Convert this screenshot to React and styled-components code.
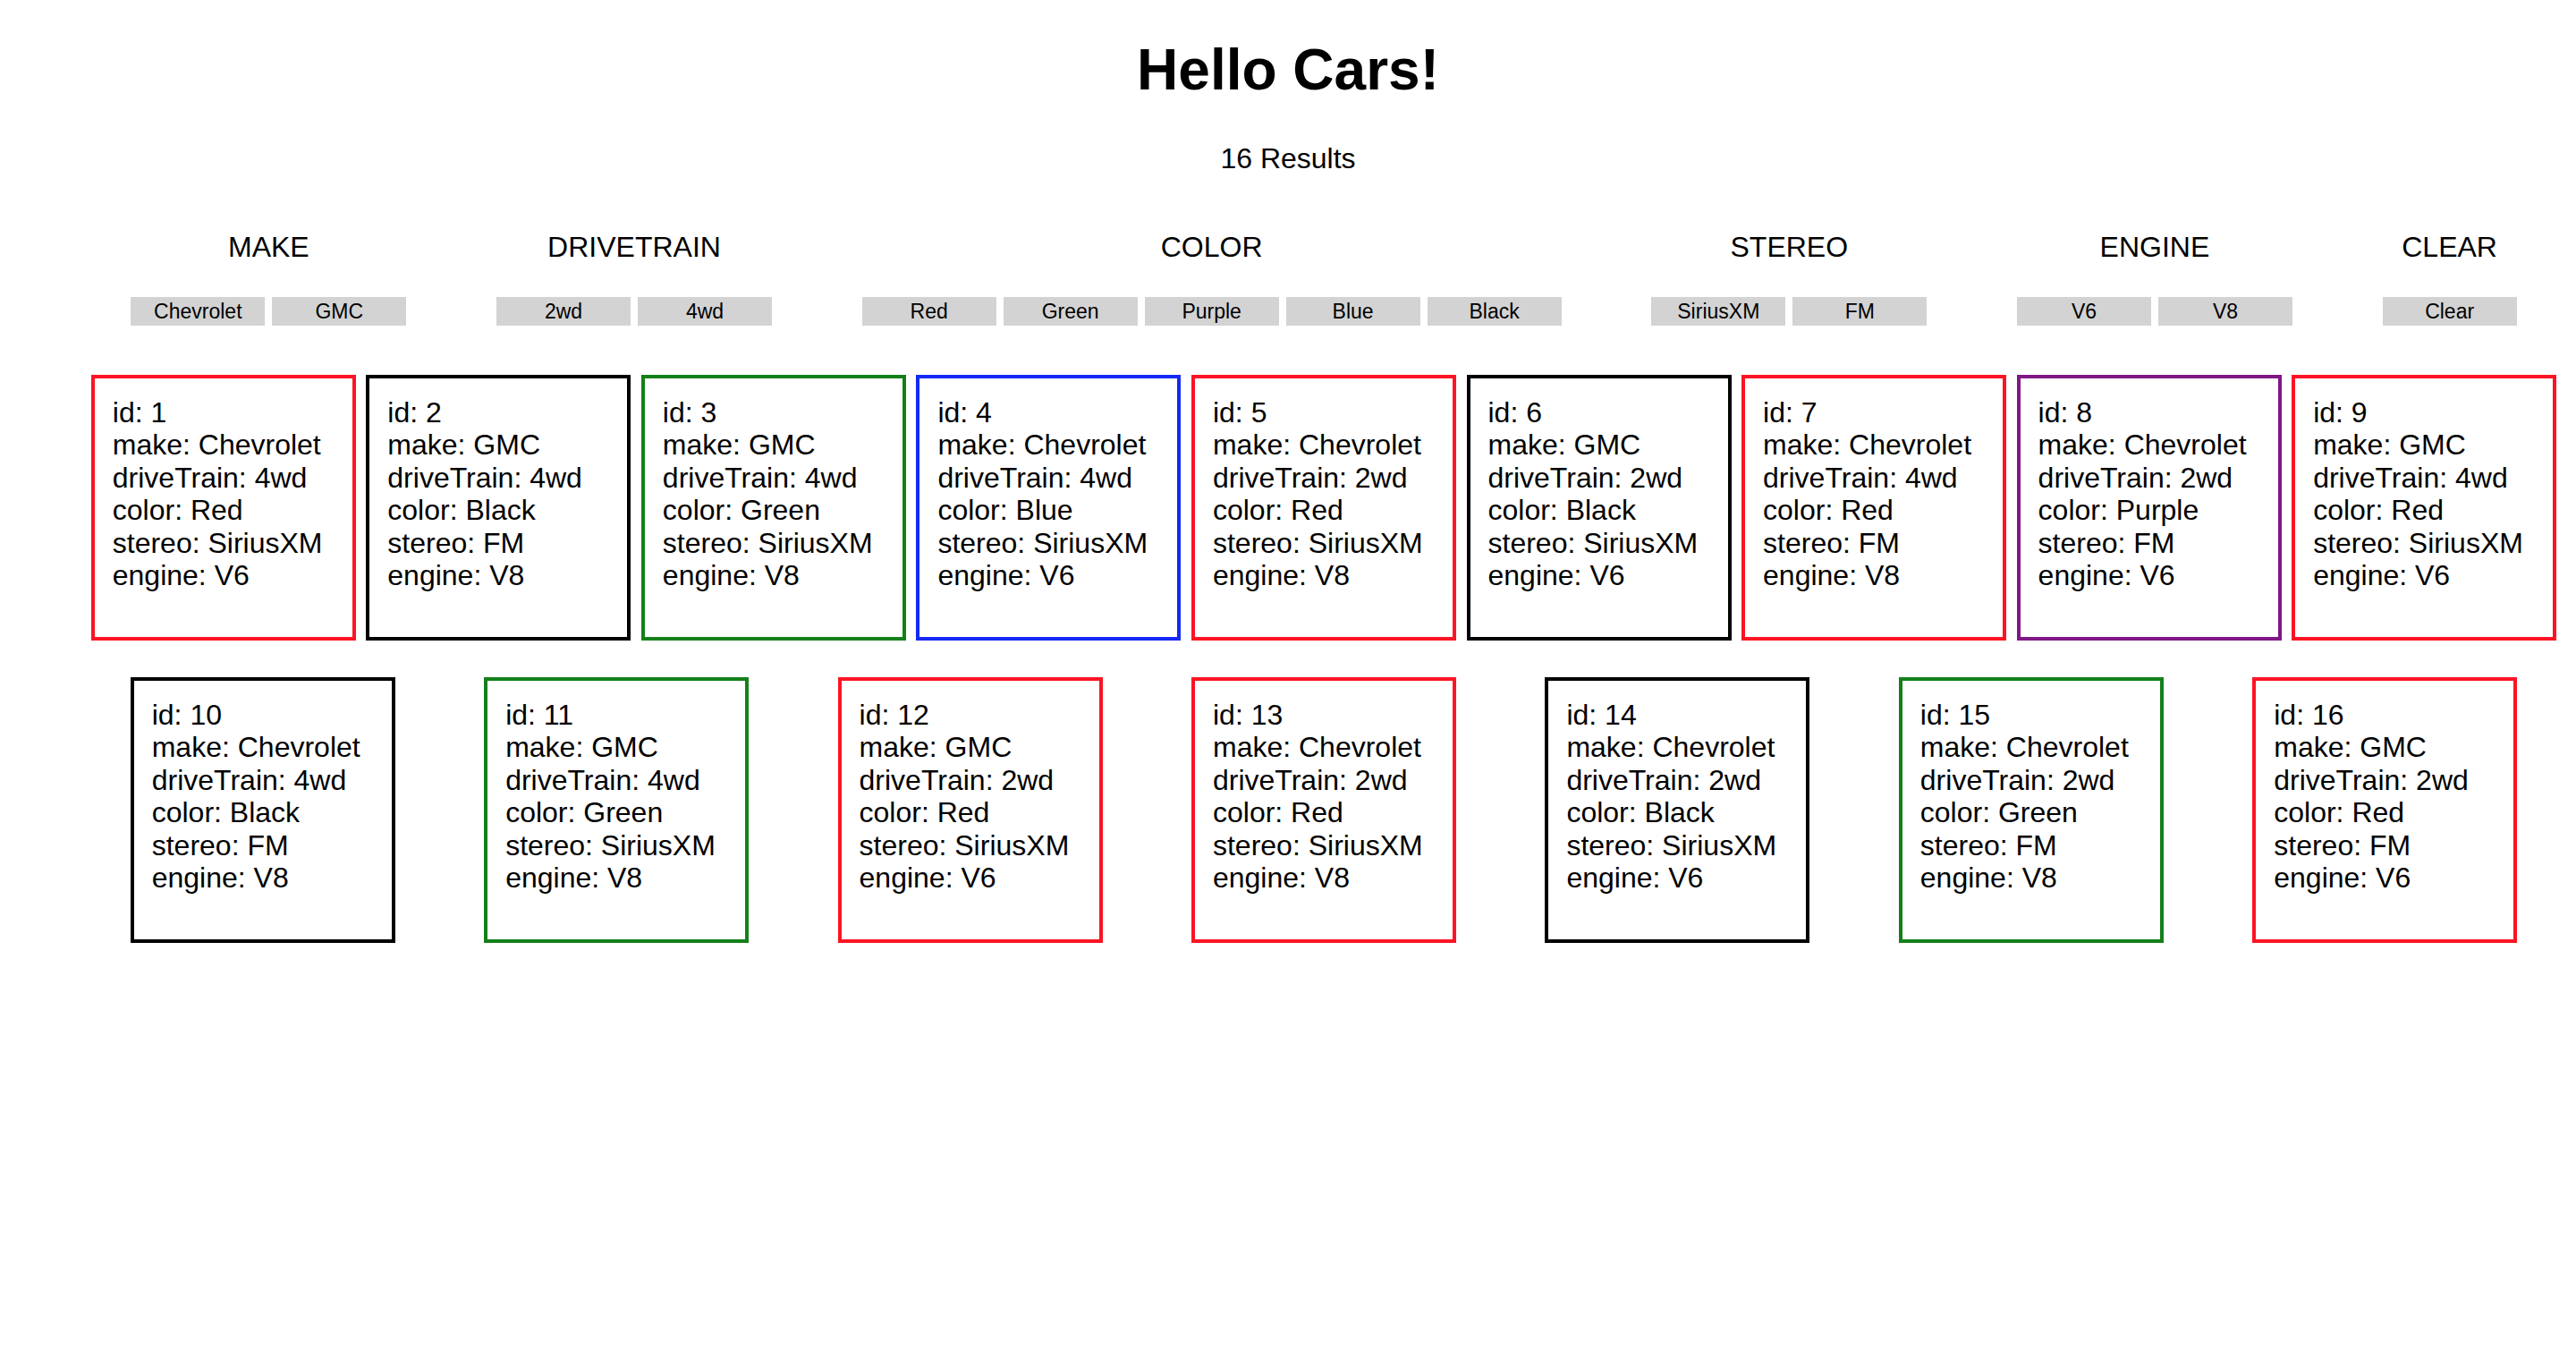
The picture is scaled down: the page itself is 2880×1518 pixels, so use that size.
import React, { useState } from 'react'
import styled, { createGlobalStyle } from 'styled-components'

const GlobalStyle = createGlobalStyle`
body{
    margin: 16px;
    background: white;
    color: black;
    font-family: "Liberation Sans", Arial, Helvetica, sans-serif;
}
`

const cars = [
    { id: 1, make: 'Chevrolet', driveTrain: '4wd', color: 'Red', stereo: 'SiriusXM', engine: 'V6' },
    { id: 2, make: 'GMC', driveTrain: '4wd', color: 'Black', stereo: 'FM', engine: 'V8' },
    { id: 3, make: 'GMC', driveTrain: '4wd', color: 'Green', stereo: 'SiriusXM', engine: 'V8' },
    { id: 4, make: 'Chevrolet', driveTrain: '4wd', color: 'Blue', stereo: 'SiriusXM', engine: 'V6' },
    { id: 5, make: 'Chevrolet', driveTrain: '2wd', color: 'Red', stereo: 'SiriusXM', engine: 'V8' },
    { id: 6, make: 'GMC', driveTrain: '2wd', color: 'Black', stereo: 'SiriusXM', engine: 'V6' },
    { id: 7, make: 'Chevrolet', driveTrain: '4wd', color: 'Red', stereo: 'FM', engine: 'V8' },
    { id: 8, make: 'Chevrolet', driveTrain: '2wd', color: 'Purple', stereo: 'FM', engine: 'V6' },
    { id: 9, make: 'GMC', driveTrain: '4wd', color: 'Red', stereo: 'SiriusXM', engine: 'V6' },
    { id: 10, make: 'Chevrolet', driveTrain: '4wd', color: 'Black', stereo: 'FM', engine: 'V8' },
    { id: 11, make: 'GMC', driveTrain: '4wd', color: 'Green', stereo: 'SiriusXM', engine: 'V8' },
    { id: 12, make: 'GMC', driveTrain: '2wd', color: 'Red', stereo: 'SiriusXM', engine: 'V6' },
    { id: 13, make: 'Chevrolet', driveTrain: '2wd', color: 'Red', stereo: 'SiriusXM', engine: 'V8' },
    { id: 14, make: 'Chevrolet', driveTrain: '2wd', color: 'Black', stereo: 'SiriusXM', engine: 'V6' },
    { id: 15, make: 'Chevrolet', driveTrain: '2wd', color: 'Green', stereo: 'FM', engine: 'V8' },
    { id: 16, make: 'GMC', driveTrain: '2wd', color: 'Red', stereo: 'FM', engine: 'V6' },
]

const filters = [
    { title: 'MAKE', key: 'make', options: ['Chevrolet', 'GMC'] },
    { title: 'DRIVETRAIN', key: 'driveTrain', options: ['2wd', '4wd'] },
    { title: 'COLOR', key: 'color', options: ['Red', 'Green', 'Purple', 'Blue', 'Black'] },
    { title: 'STEREO', key: 'stereo', options: ['SiriusXM', 'FM'] },
    { title: 'ENGINE', key: 'engine', options: ['V6', 'V8'] },
]

const borderColors = {
    Red: '#fc1424',
    Black: '#000000',
    Green: '#13801a',
    Blue: '#1429f5',
    Purple: '#7f1785',
}

const Page = styled.div`
    text-align: center;
`

const Title = styled.h1`
    font-size: 64px;
    font-weight: bold;
    line-height: normal;
    margin: 25px 0 0;
`

const Results = styled.div`
    font-size: 32px;
    margin-top: 44px;
`

const FilterBar = styled.div`
    display: flex;
    justify-content: space-around;
    padding-left: 80px;
    margin-top: 62px;
`

const FilterGroup = styled.div`
    display: flex;
    flex-direction: column;
    align-items: center;
`

const FilterTitle = styled.div`
    font-size: 32px;
    margin-bottom: 37px;
`

const ButtonRow = styled.div`
    display: flex;
    gap: 8px;
`

const FilterButton = styled.button`
    width: 150px;
    height: 32px;
    padding: 0;
    border: none;
    background: ${props => props.active ? '#b5b5b5' : '#d3d3d3'};
    font-family: "Liberation Sans", Arial, sans-serif;
    font-size: 23px;
    color: black;
    cursor: pointer;
`

const CardList = styled.div`
    display: flex;
    flex-wrap: wrap;
    justify-content: space-around;
    padding-left: 80px;
    margin-top: 34px;
    text-align: left;
`

const Card = styled.div`
    box-sizing: border-box;
    width: 296px;
    height: 297px;
    margin: 21px 0 20px;
    padding: 20px 20px;
    border: 4px solid ${props => props.borderColor};
    font-size: 32px;
    line-height: 36.4px;
`

function App() {
    const [selected, setSelected] = useState({})

    const shown = cars.filter(car =>
        Object.keys(selected).every(key => car[key] === selected[key])
    )

    return (
        <Page>
            <GlobalStyle />
            <Title>Hello Cars!</Title>
            <Results>{shown.length} Results</Results>
            <FilterBar>
                {filters.map(group => (
                    <FilterGroup key={group.key}>
                        <FilterTitle>{group.title}</FilterTitle>
                        <ButtonRow>
                            {group.options.map(option => (
                                <FilterButton
                                    key={option}
                                    active={selected[group.key] === option}
                                    onClick={() => setSelected({ ...selected, [group.key]: option })}
                                >
                                    {option}
                                </FilterButton>
                            ))}
                        </ButtonRow>
                    </FilterGroup>
                ))}
                <FilterGroup>
                    <FilterTitle>CLEAR</FilterTitle>
                    <ButtonRow>
                        <FilterButton onClick={() => setSelected({})}>Clear</FilterButton>
                    </ButtonRow>
                </FilterGroup>
            </FilterBar>
            <CardList>
                {shown.map(car => (
                    <Card key={car.id} borderColor={borderColors[car.color]}>
                        <div>id: {car.id}</div>
                        <div>make: {car.make}</div>
                        <div>driveTrain: {car.driveTrain}</div>
                        <div>color: {car.color}</div>
                        <div>stereo: {car.stereo}</div>
                        <div>engine: {car.engine}</div>
                    </Card>
                ))}
            </CardList>
        </Page>
    )
}

export default App
